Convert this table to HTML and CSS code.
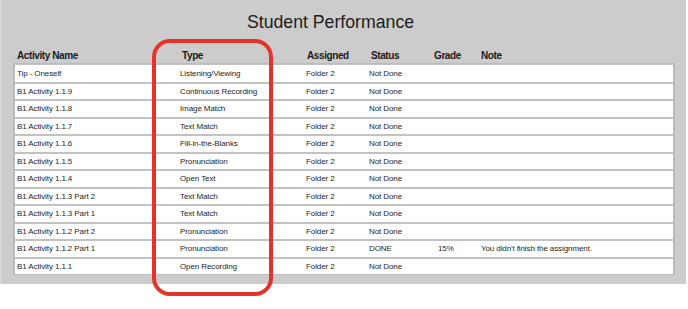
FILE: index.html
```html
<!DOCTYPE html>
<html>
<head>
<meta charset="utf-8">
<link rel="stylesheet" href="styles.css">
</head>
<body>
<div class="panel">
  <h1 class="title">Student Performance</h1>
  <div class="table">
    <div class="row head">
      <div>Activity Name</div><div>Type</div><div>Assigned</div><div>Status</div><div>Grade</div><div>Note</div>
    </div>
    <div class="body">
      <div class="row"><div>Tip - Oneself</div><div>Listening/Viewing</div><div>Folder 2</div><div>Not Done</div><div></div><div></div></div>
      <div class="row"><div>B1 Activity 1.1.9</div><div>Continuous Recording</div><div>Folder 2</div><div>Not Done</div><div></div><div></div></div>
      <div class="row"><div>B1 Activity 1.1.8</div><div>Image Match</div><div>Folder 2</div><div>Not Done</div><div></div><div></div></div>
      <div class="row"><div>B1 Activity 1.1.7</div><div>Text Match</div><div>Folder 2</div><div>Not Done</div><div></div><div></div></div>
      <div class="row"><div>B1 Activity 1.1.6</div><div>Fill-in-the-Blanks</div><div>Folder 2</div><div>Not Done</div><div></div><div></div></div>
      <div class="row"><div>B1 Activity 1.1.5</div><div>Pronunciation</div><div>Folder 2</div><div>Not Done</div><div></div><div></div></div>
      <div class="row"><div>B1 Activity 1.1.4</div><div>Open Text</div><div>Folder 2</div><div>Not Done</div><div></div><div></div></div>
      <div class="row"><div>B1 Activity 1.1.3 Part 2</div><div>Text Match</div><div>Folder 2</div><div>Not Done</div><div></div><div></div></div>
      <div class="row"><div>B1 Activity 1.1.3 Part 1</div><div>Text Match</div><div>Folder 2</div><div>Not Done</div><div></div><div></div></div>
      <div class="row"><div>B1 Activity 1.1.2 Part 2</div><div>Pronunciation</div><div>Folder 2</div><div>Not Done</div><div></div><div></div></div>
      <div class="row"><div>B1 Activity 1.1.2 Part 1</div><div>Pronunciation</div><div>Folder 2</div><div>DONE</div><div class="grade">15%</div><div>You didn't finish the assignment.</div></div>
      <div class="row"><div>B1 Activity 1.1.1</div><div>Open Recording</div><div>Folder 2</div><div>Not Done</div><div></div><div></div></div>
    </div>
  </div>
</div>
<div class="highlight"></div>
</body>
</html>
```

FILE: styles.css
```css
html, body {
  margin: 0;
  padding: 0;
  background: #ffffff;
  font-family: "Liberation Sans", Arial, sans-serif;
}
.panel {
  width: 686px;
  height: 284px;
  box-sizing: border-box;
  background: #cccccc;
  border-left: 1px solid #dadada;
  padding: 10px 12px 0 12px;
}
.title {
  margin: 0;
  height: 34px;
  font-size: 17.7px;
  font-weight: normal;
  color: #1c1c1c;
  text-align: center;
  line-height: 24px;
  padding-right: 26px;
}
.table {
  width: 662px;
}
.row {
  display: grid;
  grid-template-columns: 163px 126px 63px 65px 47px 1fr;
  align-items: center;
}
.row > div {
  padding-left: 2px;
  white-space: nowrap;
}
.head {
  height: 19px;
  box-sizing: border-box;
  padding-top: 3px;
  font-size: 10px;
  font-weight: bold;
  letter-spacing: -0.4px;
  color: #1a1a1a;
}
.head > div { padding-left: 4px; }
.head > div:nth-child(2) { padding-left: 6px; }
.head > div:nth-child(3) { padding-left: 5px; }
.head > div:nth-child(4) { padding-left: 6px; }
.body {
  background: #ffffff;
  border: 2px solid #bcbcbc;
  border-top-width: 1px;
  border-bottom-width: 1px;
}
.body .row {
  height: 17.5px;
  box-sizing: border-box;
  border-top: 2px solid #c2c2c2;
  font-size: 8px;
  letter-spacing: -0.1px;
  color: #1e1e1e;
}
.body .row:first-child {
  border-top: 1px solid #c2c2c2;
}
.body .row .grade {
  padding-left: 6px;
}
.highlight {
  position: absolute;
  left: 152px;
  top: 39px;
  width: 121px;
  height: 257px;
  box-sizing: border-box;
  border: 4px solid #e5332a;
  border-radius: 18px;
}
```
